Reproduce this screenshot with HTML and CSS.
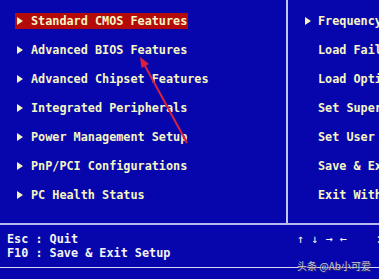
FILE: index.html
```html
<html>
<head>
<meta http-equiv="Content-Type" content="text/html; charset=UTF-8" />
<title>CMOS Setup Utility</title>
<link rel="stylesheet" href="styles.css">
</head>
<body>

<div class="bios">
  <div class="main">
    <ul class="menu left">
      <li class="active"><span class="tri"></span>Standard CMOS Features</li>
      <li><span class="tri"></span>Advanced BIOS Features</li>
      <li><span class="tri"></span>Advanced Chipset Features</li>
      <li><span class="tri"></span>Integrated Peripherals</li>
      <li><span class="tri"></span>Power Management Setup</li>
      <li><span class="tri"></span>PnP/PCI Configurations</li>
      <li><span class="tri"></span>PC Health Status</li>
    </ul>
    <div class="vline"></div>
    <ul class="menu right">
      <li><span class="tri"></span>Frequency/Voltage Control</li>
      <li><span class="tri none"></span>Load Fail-Safe Defaults</li>
      <li><span class="tri none"></span>Load Optimized Defaults</li>
      <li><span class="tri none"></span>Set Supervisor Password</li>
      <li><span class="tri none"></span>Set User Password</li>
      <li><span class="tri none"></span>Save &amp; Exit Setup</li>
      <li><span class="tri none"></span>Exit Without Saving</li>
    </ul>
  </div>

  <div class="foot">
    <div class="keys">
      <div class="ln">Esc : Quit</div>
      <div class="ln">F10 : Save &amp; Exit Setup</div>
    </div>
    <div class="moves ln">↑ ↓ → ←    : Select Item</div>
  </div>

  <div class="mark">头条 @Ab小可爱</div>

  <svg class="pointer" width="379" height="279" viewBox="0 0 379 279">
    <line x1="187" y1="143" x2="144" y2="64" stroke="#d9203c" stroke-width="2"/>
    <polygon points="140,57 149,64 141.5,68" fill="#d9203c"/>
  </svg>
</div>

</body>
</html>
```

FILE: styles.css
```css
body {
	margin: 0;
	padding: 0;
	background: #0606ac;
	overflow: hidden;
}

.bios {
	position: relative;
	width: 379px;
	height: 279px;
	background: #0606ac;
	font: bold 11.8px/16px "DejaVu Sans Mono", "Liberation Mono", monospace;
	color: #f6f6c4;
	overflow: hidden;
}

.main {
	display: grid;
	grid-template-columns: 286px 2px 1fr;
	height: 223px;
	border-bottom: 2px solid #b8b8ee;
}

.vline {
	background: #c4c4f0;
}

ul.menu {
	list-style: none;
	margin: 0;
	padding: 13px 0 0 15px;
	white-space: nowrap;
	overflow: hidden;
}

ul.menu li {
	display: flex;
	align-items: center;
	height: 16px;
	margin-bottom: 13px;
	padding-left: 2px;
}

ul.menu li.active {
	display: inline-flex;
	background: #b40a0a;
}

.left li.active {
	width: 171px;
}

ul.right {
	padding-left: 15px;
}

.tri {
	width: 0;
	height: 0;
	border-left: 6px solid #f6f6c4;
	border-top: 4px solid transparent;
	border-bottom: 4px solid transparent;
	margin-right: 8px;
	flex: none;
}

.right .tri {
	margin-right: 7px;
}

.tri.none {
	border-left-color: transparent;
}

.foot {
	display: flex;
	height: 42px;
	border-bottom: 1px solid #d8d8f4;
	color: #f4f4f4;
	line-height: 14px;
	overflow: hidden;
}

.ln {
	white-space: pre;
}

.keys {
	flex: none;
	width: 290px;
	padding: 7px 0 0 7px;
}

.moves {
	flex: none;
	padding-top: 7px;
	font-weight: normal;
}

.mark {
	position: absolute;
	left: 297px;
	top: 259px;
	font: 10px/13px "Noto Sans CJK SC", "Noto Sans", sans-serif;
	color: #c8c8d8;
	text-shadow: 1px 1px 0 #303060;
	white-space: nowrap;
}

.pointer {
	position: absolute;
	left: 0;
	top: 0;
}
```
